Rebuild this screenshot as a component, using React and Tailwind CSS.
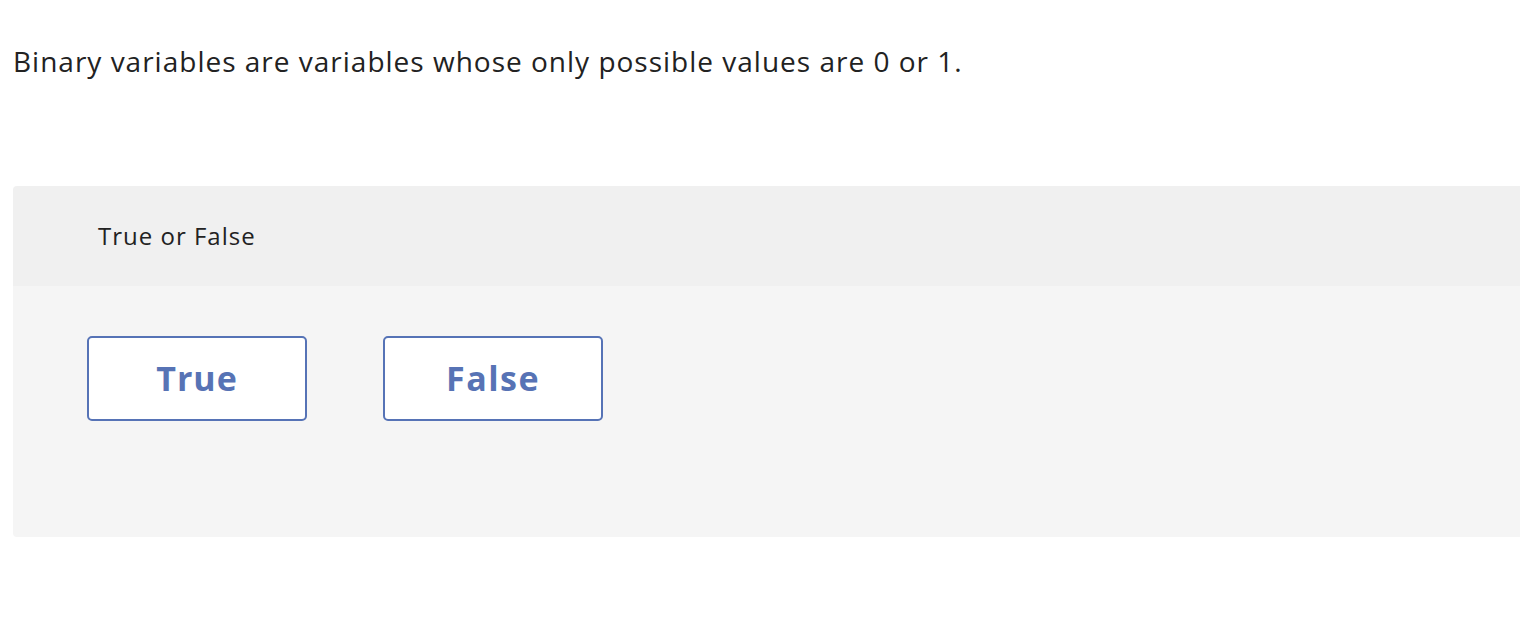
export default function App() {
  return (
    <div className="w-[1520px] h-[640px] bg-white overflow-hidden" style={{ fontFamily: '"Open Sans", "Lato", sans-serif' }}>
      <div className="pt-[41px] pl-[13px]">
        <p className="text-[28px] leading-[40px] tracking-[1px] text-[#222222]">
          Binary variables are variables whose only possible values are 0 or 1.
        </p>
      </div>
      <div className="mt-[105px] ml-[13px] rounded-l-[4px] overflow-hidden">
        <div className="h-[100px] bg-[#f0f0f0] flex items-center pl-[85px]">
          <span className="text-[24px] tracking-[1px] text-[#222222]">True or False</span>
        </div>
        <div className="h-[251px] bg-[#f5f5f5] pl-[74px] pt-[50px] flex items-start gap-[76px]">
          <button className="w-[220px] h-[85px] bg-white border-2 border-[#5673b6] rounded-[5px] text-[34px] tracking-[1px] font-bold text-[#5773b5]">
            True
          </button>
          <button className="w-[220px] h-[85px] bg-white border-2 border-[#5673b6] rounded-[5px] text-[34px] tracking-[1.5px] font-bold text-[#5773b5]">
            False
          </button>
        </div>
      </div>
    </div>
  );
}
